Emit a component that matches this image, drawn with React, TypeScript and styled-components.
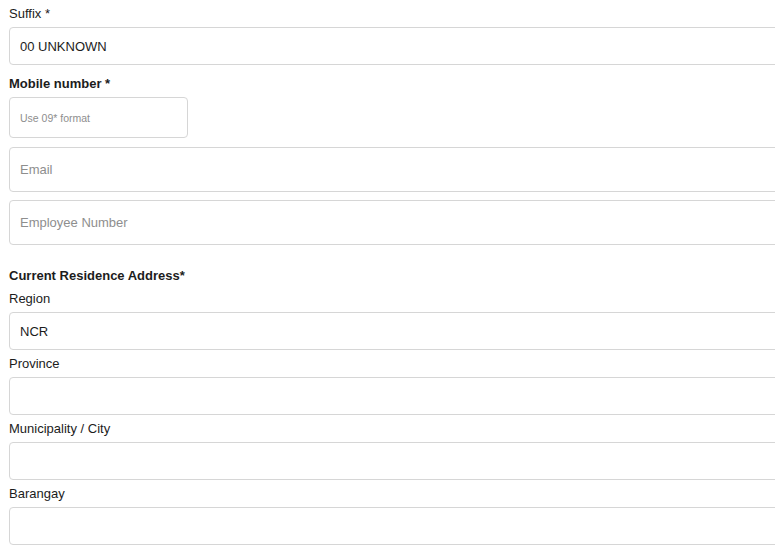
import styled, { createGlobalStyle } from 'styled-components';

const GlobalStyle = createGlobalStyle`
  html, body {
    margin: 0;
    padding: 0;
    background: #ffffff;
    overflow: hidden;
  }

  body {
    font-family: 'Liberation Sans', Arial, sans-serif;
    color: #1c1c1c;
  }
`;

const Form = styled.form`
  width: 800px;
  padding: 6px 0 0 9px;

  display: flex;
  flex-direction: column;
`;

const Field = styled.div<{ gapAfter?: number }>`
  display: flex;
  flex-direction: column;
  margin-bottom: ${({ gapAfter }) => (gapAfter ?? 8)}px;
`;

const Label = styled.label<{ bold?: boolean }>`
  font-size: 13px;
  line-height: 16px;
  font-weight: ${({ bold }) => (bold ? 700 : 400)};
  margin-bottom: 5px;
`;

const SectionTitle = styled.div`
  font-size: 13px;
  line-height: 16px;
  font-weight: 700;
  margin: 15px 0 7px;
`;

const Input = styled.input<{ boxHeight?: number; small?: boolean; narrow?: boolean }>`
  box-sizing: border-box;
  width: ${({ narrow }) => (narrow ? '179px' : '100%')};
  height: ${({ boxHeight }) => boxHeight ?? 38}px;
  padding: 0 10px;

  border: 1px solid #d6d6d6;
  border-radius: 4px;
  background: #ffffff;
  outline: none;

  font-family: 'Liberation Sans', Arial, sans-serif;
  font-size: ${({ small }) => (small ? '10.5px' : '13px')};
  color: #1c1c1c;

  &::placeholder {
    color: #8e8e8e;
  }
`;

function App() {
  return (
    <>
      <GlobalStyle />
      <Form>
        <Field gapAfter={11}>
          <Label>Suffix *</Label>
          <Input boxHeight={38} defaultValue="00 UNKNOWN" readOnly />
        </Field>

        <Field gapAfter={9}>
          <Label bold>Mobile number *</Label>
          <Input boxHeight={41} narrow small placeholder="Use 09* format" />
        </Field>

        <Field gapAfter={8}>
          <Input boxHeight={45} placeholder="Email" />
        </Field>

        <Field gapAfter={8}>
          <Input boxHeight={45} placeholder="Employee Number" />
        </Field>

        <SectionTitle>Current Residence Address*</SectionTitle>

        <Field gapAfter={6}>
          <Label>Region</Label>
          <Input defaultValue="NCR" readOnly />
        </Field>

        <Field gapAfter={6}>
          <Label>Province</Label>
          <Input />
        </Field>

        <Field gapAfter={6}>
          <Label>Municipality / City</Label>
          <Input />
        </Field>

        <Field gapAfter={6}>
          <Label>Barangay</Label>
          <Input />
        </Field>
      </Form>
    </>
  );
}

export default App;
